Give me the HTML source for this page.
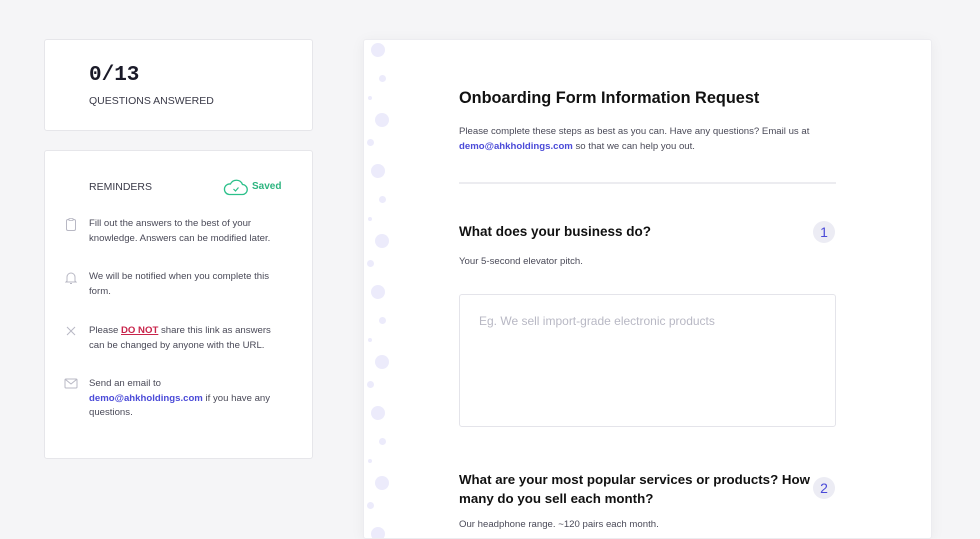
<!DOCTYPE html>
<html><head><style>
*{margin:0;padding:0;box-sizing:border-box}
body{width:980px;height:531px;overflow:hidden;background:#f5f5f7;font-family:"Liberation Sans",sans-serif;color:#3a3a48;position:relative}
.card{position:absolute;background:#fff;border:1px solid #e6e6ea;border-radius:3px}
.abs{position:absolute;white-space:nowrap}
.sm{font-size:9.6px;line-height:14.5px;color:#4a4a58}
.link{color:#4a4ad8;font-weight:bold}
.dot{position:absolute;border-radius:50%;background:#ecebfb}
</style></head><body>
<div class="card" style="left:44px;top:39px;width:269px;height:92px"></div>
<div class="abs" style="left:89px;top:64px;font-family:'Liberation Mono',monospace;font-weight:bold;font-size:21px;color:#1a1a28">0/13</div>
<div class="abs" style="left:89px;top:95px;font-size:10.5px;color:#3a3a48">QUESTIONS ANSWERED</div>

<div class="card" style="left:44px;top:150px;width:269px;height:309px"></div>
<div class="abs" style="left:89px;top:181px;font-size:10.5px;color:#3a3a48">REMINDERS</div>
<svg class="abs" style="left:223px;top:178px" width="26" height="18" viewBox="0 0 26 18"><path d="M6 16.5h13a5 5 0 0 0 .5-10A6.5 6.5 0 0 0 7.5 6 5 5 0 0 0 6 16.5z" fill="none" stroke="#2cc08a" stroke-width="1.3"/><path d="M10.5 11l2 2 3-3.5" fill="none" stroke="#2cc08a" stroke-width="1.2"/></svg>
<div class="abs" style="left:252px;top:181px;font-size:10px;font-weight:bold;color:#2cb47f">Saved</div>

<svg class="abs" style="left:65px;top:218px" width="12" height="13" viewBox="0 0 12 13"><rect x="1.5" y="1.5" width="9" height="11" rx="1.5" fill="none" stroke="#b8b8c4"/><rect x="4" y="0.5" width="4" height="2" fill="#fff" stroke="#b8b8c4" stroke-width=".8"/></svg>
<div class="abs sm" style="left:89px;top:217px">Fill out the answers to the best of your<br>knowledge. Answers can be modified later.</div>
<svg class="abs" style="left:65px;top:271px" width="12" height="14" viewBox="0 0 12 14"><path d="M2 10V6a4 4 0 0 1 8 0v4l1 1H1z M5 12.5h2" fill="none" stroke="#b8b8c4"/></svg>
<div class="abs sm" style="left:89px;top:270px">We will be notified when you complete this<br>form.</div>
<svg class="abs" style="left:66px;top:326px" width="10" height="10" viewBox="0 0 10 10"><path d="M1 1l8 8M9 1L1 9" stroke="#b8b8c4"/></svg>
<div class="abs sm" style="left:89px;top:324px">Please <span style="color:#c8234a;font-weight:bold;text-decoration:underline">DO NOT</span> share this link as answers<br>can be changed by anyone with the URL.</div>
<svg class="abs" style="left:64px;top:378px" width="14" height="11" viewBox="0 0 14 11"><rect x="1" y="1" width="12" height="9" rx="1" fill="none" stroke="#b8b8c4"/><path d="M1.5 1.5l5.5 4.5 5.5-4.5" fill="none" stroke="#b8b8c4"/></svg>
<div class="abs sm" style="left:89px;top:377px">Send an email to<br><span class="link">demo@ahkholdings.com</span> if you have any<br>questions.</div>

<div class="card" style="left:363px;top:39px;width:569px;height:500px;border-color:#ececf0;box-shadow:0 2px 14px rgba(0,0,0,.05);overflow:hidden">
<div style="position:absolute;left:0;top:0;width:40px;height:500px">
<div class="dot" style="left:7px;top:3px;width:14px;height:14px"></div>
<div class="dot" style="left:15px;top:35px;width:7px;height:7px"></div>
<div class="dot" style="left:4px;top:56px;width:4px;height:4px"></div>
<div class="dot" style="left:11px;top:73px;width:14px;height:14px"></div>
<div class="dot" style="left:3px;top:99px;width:7px;height:7px"></div>
<div class="dot" style="left:7px;top:124px;width:14px;height:14px"></div>
<div class="dot" style="left:15px;top:156px;width:7px;height:7px"></div>
<div class="dot" style="left:4px;top:177px;width:4px;height:4px"></div>
<div class="dot" style="left:11px;top:194px;width:14px;height:14px"></div>
<div class="dot" style="left:3px;top:220px;width:7px;height:7px"></div>
<div class="dot" style="left:7px;top:245px;width:14px;height:14px"></div>
<div class="dot" style="left:15px;top:277px;width:7px;height:7px"></div>
<div class="dot" style="left:4px;top:298px;width:4px;height:4px"></div>
<div class="dot" style="left:11px;top:315px;width:14px;height:14px"></div>
<div class="dot" style="left:3px;top:341px;width:7px;height:7px"></div>
<div class="dot" style="left:7px;top:366px;width:14px;height:14px"></div>
<div class="dot" style="left:15px;top:398px;width:7px;height:7px"></div>
<div class="dot" style="left:4px;top:419px;width:4px;height:4px"></div>
<div class="dot" style="left:11px;top:436px;width:14px;height:14px"></div>
<div class="dot" style="left:3px;top:462px;width:7px;height:7px"></div>
<div class="dot" style="left:7px;top:487px;width:14px;height:14px"></div>
</div>
</div>
<div class="abs" style="left:459px;top:89px;font-size:16.3px;font-weight:bold;color:#111">Onboarding Form Information Request</div>
<div class="abs sm" style="left:459px;top:125px">Please complete these steps as best as you can. Have any questions? Email us at<br><span class="link">demo@ahkholdings.com</span> so that we can help you out.</div>
<div class="abs" style="left:459px;top:182px;width:377px;height:2px;background:#ececf0"></div>
<div class="abs" style="left:459px;top:224px;font-size:13.5px;font-weight:bold;color:#111">What does your business do?</div>
<div class="abs" style="left:813px;top:221px;width:22px;height:22px;border-radius:50%;background:#ececf4;color:#4a4ad8;font-size:14px;text-align:center;line-height:22px">1</div>
<div class="abs sm" style="left:459px;top:255px">Your 5-second elevator pitch.</div>
<div class="abs" style="left:459px;top:294px;width:377px;height:133px;border:1.5px solid #e4e4ea;border-radius:3px"></div>
<div class="abs" style="left:479px;top:314px;font-size:12px;color:#b8b8c4">Eg. We sell import-grade electronic products</div>
<div class="abs" style="left:459px;top:470px;font-size:13.3px;font-weight:bold;color:#111;line-height:19px">What are your most popular services or products? How<br>many do you sell each month?</div>
<div class="abs" style="left:813px;top:477px;width:22px;height:22px;border-radius:50%;background:#ececf4;color:#4a4ad8;font-size:14px;text-align:center;line-height:22px">2</div>
<div class="abs sm" style="left:459px;top:518px">Our headphone range. ~120 pairs each month.</div>
</body></html>
